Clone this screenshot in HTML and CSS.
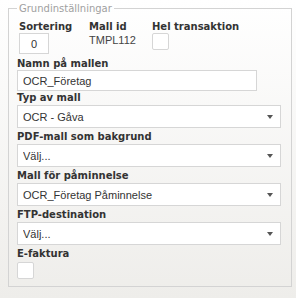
FILE: index.html
```html
<!DOCTYPE html>
<html lang="sv">
<head>
    <title>Grundinställningar</title>
    <link rel="stylesheet" href="styles.css">
</head>
<body>
    <fieldset class="settings">
        <legend>Grundinställningar</legend>

        <!-- Top row -->
        <div class="top-row">
            <div class="cell cell-sort">
                <label for="sort">Sortering</label>
                <input type="text" id="sort" class="small-input" value="0">
            </div>
            <div class="cell cell-id">
                <label>Mall id</label>
                <span class="value">TMPL112</span>
            </div>
            <div class="cell">
                <label for="whole">Hel transaktion</label>
                <span class="check" id="whole"></span>
            </div>
        </div>

        <div class="form-group name-group">
            <label for="name">Namn på mallen</label>
            <input type="text" id="name" class="text-input" value="OCR_Företag">
        </div>

        <div class="form-group">
            <label for="type">Typ av mall</label>
            <div class="select-wrap">
                <select id="type"><option>OCR - Gåva</option></select>
            </div>
        </div>

        <div class="form-group">
            <label for="pdf">PDF-mall som bakgrund</label>
            <div class="select-wrap">
                <select id="pdf"><option>Välj...</option></select>
            </div>
        </div>

        <div class="form-group">
            <label for="reminder">Mall för påminnelse</label>
            <div class="select-wrap">
                <select id="reminder"><option>OCR_Företag Påminnelse</option></select>
            </div>
        </div>

        <div class="form-group">
            <label for="ftp">FTP-destination</label>
            <div class="select-wrap">
                <select id="ftp"><option>Välj...</option></select>
            </div>
        </div>

        <div class="form-group efaktura">
            <label>E-faktura</label>
            <span class="check"></span>
        </div>
    </fieldset>
</body>
</html>
```

FILE: styles.css
```css
html, body {
    height: 100%;
}

body {
    margin: 0;
    padding: 2px 0 0 8px;
    box-sizing: border-box;
    background: linear-gradient(#ffffff, #eeedea);
    font-family: "Liberation Sans", Arial, sans-serif;
    font-size: 11px;
    color: #333;
}

.settings {
    width: 284px;
    box-sizing: border-box;
    margin: 0;
    padding: 5px 8px 7px 8px;
    border: 1px solid #d3d3d3;
}

legend {
    padding: 0 2px;
    font-family: "DejaVu Sans", Verdana, sans-serif;
    font-size: 10px;
    line-height: 13px;
    color: #a0a0a0;
}

label {
    display: block;
    font-family: "DejaVu Sans", Verdana, sans-serif;
    font-weight: bold;
    font-size: 10px;
    line-height: 13px;
    color: #333;
}

.top-row {
    display: flex;
    padding-left: 2px;
    margin-bottom: 3px;
}

.cell-sort {
    width: 70px;
}

.cell-id {
    width: 63px;
}

.value {
    display: block;
    margin-top: 1px;
    line-height: 13px;
    color: #444;
}

.small-input {
    display: block;
    width: 30px;
    height: 21px;
    box-sizing: border-box;
    border: 1px solid #d6d6d6;
    padding: 0;
    text-align: center;
    font-family: "Liberation Sans", Arial, sans-serif;
    font-size: 11px;
    color: #333;
    background: #fff;
}

.check {
    display: block;
    width: 17px;
    height: 17px;
    box-sizing: border-box;
    border: 1px solid #d6d6d6;
    border-radius: 2px;
    background: #fff;
}

.form-group {
    margin-bottom: 2px;
}

.name-group {
    margin-bottom: 0;
}

.efaktura {
    margin-top: 1px;
    margin-bottom: 0;
}

.efaktura .check {
    margin-top: 2px;
}

.text-input {
    display: block;
    width: 240px;
    height: 21px;
    box-sizing: border-box;
    border: 1px solid #d6d6d6;
    padding: 0 5px;
    font-family: "Liberation Sans", Arial, sans-serif;
    font-size: 11px;
    color: #333;
    background: #fff;
}

.select-wrap {
    position: relative;
    width: 264px;
    margin-top: 1px;
}

.select-wrap::after {
    content: "";
    position: absolute;
    right: 8px;
    top: 10px;
    border-left: 3px solid transparent;
    border-right: 3px solid transparent;
    border-top: 4px solid #555;
}

select {
    display: block;
    width: 264px;
    height: 23px;
    box-sizing: border-box;
    -webkit-appearance: none;
    appearance: none;
    border: 1px solid #d6d6d6;
    border-radius: 0;
    padding: 0 5px;
    font-family: "Liberation Sans", Arial, sans-serif;
    font-size: 11px;
    color: #333;
    background: #fff;
}
```
